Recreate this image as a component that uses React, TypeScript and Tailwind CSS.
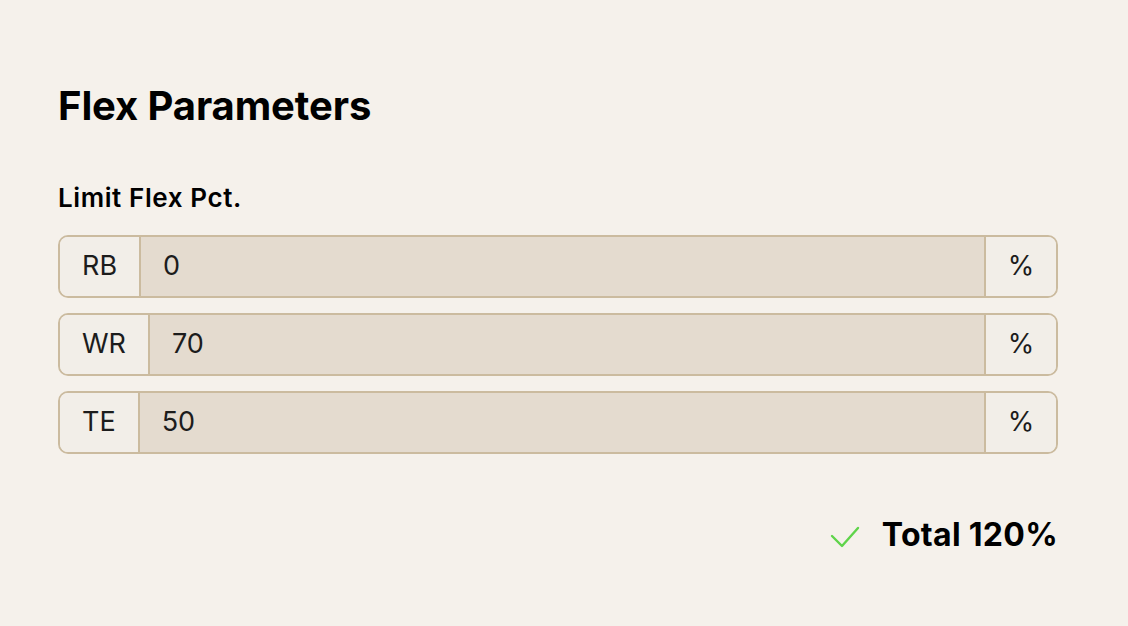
const rows = [
  { label: "RB", value: "0" },
  { label: "WR", value: "70" },
  { label: "TE", value: "50" },
];

const App = () => {
  return (
    <main className="min-h-screen bg-[#f5f1eb] px-[58px] pt-[82px] font-['Inter',sans-serif] text-black">
      <div className="w-[1000px]">
        <h1 className="text-[40px] font-bold leading-[48px] tracking-[-0.1px]">Flex Parameters</h1>
        <h2 className="mt-[52px] text-[26px] font-semibold leading-[32px] tracking-[0.6px]">Limit Flex Pct.</h2>
        <div className="mt-[21px] flex flex-col gap-[15px]">
          {rows.map((row) => (
            <div key={row.label} className="flex h-[63px] overflow-hidden rounded-[10px] border-2 border-[#cbbb9f] text-[27px] text-[#1c1c1c]">
              <span className="flex items-center border-r-2 border-[#cbbb9f] bg-[#f2eee8] px-[22px]">{row.label}</span>
              <input
                className="min-w-0 flex-1 bg-[#e4dbcf] px-[22px] outline-none"
                defaultValue={row.value}
              />
              <span className="flex w-[72px] items-center justify-center border-l-2 border-[#cbbb9f] bg-[#f2eee8]">%</span>
            </div>
          ))}
        </div>
        <div className="mt-[62px] flex items-center justify-end gap-[22px]">
          <svg className="mt-[4px]" width="30" height="22" viewBox="0 0 30 22" fill="none" stroke="#5fd44a" strokeWidth="2.4" strokeLinecap="round" strokeLinejoin="round">
            <path d="M2 10 L12 20 L28 2" />
          </svg>
          <span className="text-[32px] font-bold leading-[38px] tracking-[0.3px]">Total 120%</span>
        </div>
      </div>
    </main>
  );
};

export default App;
